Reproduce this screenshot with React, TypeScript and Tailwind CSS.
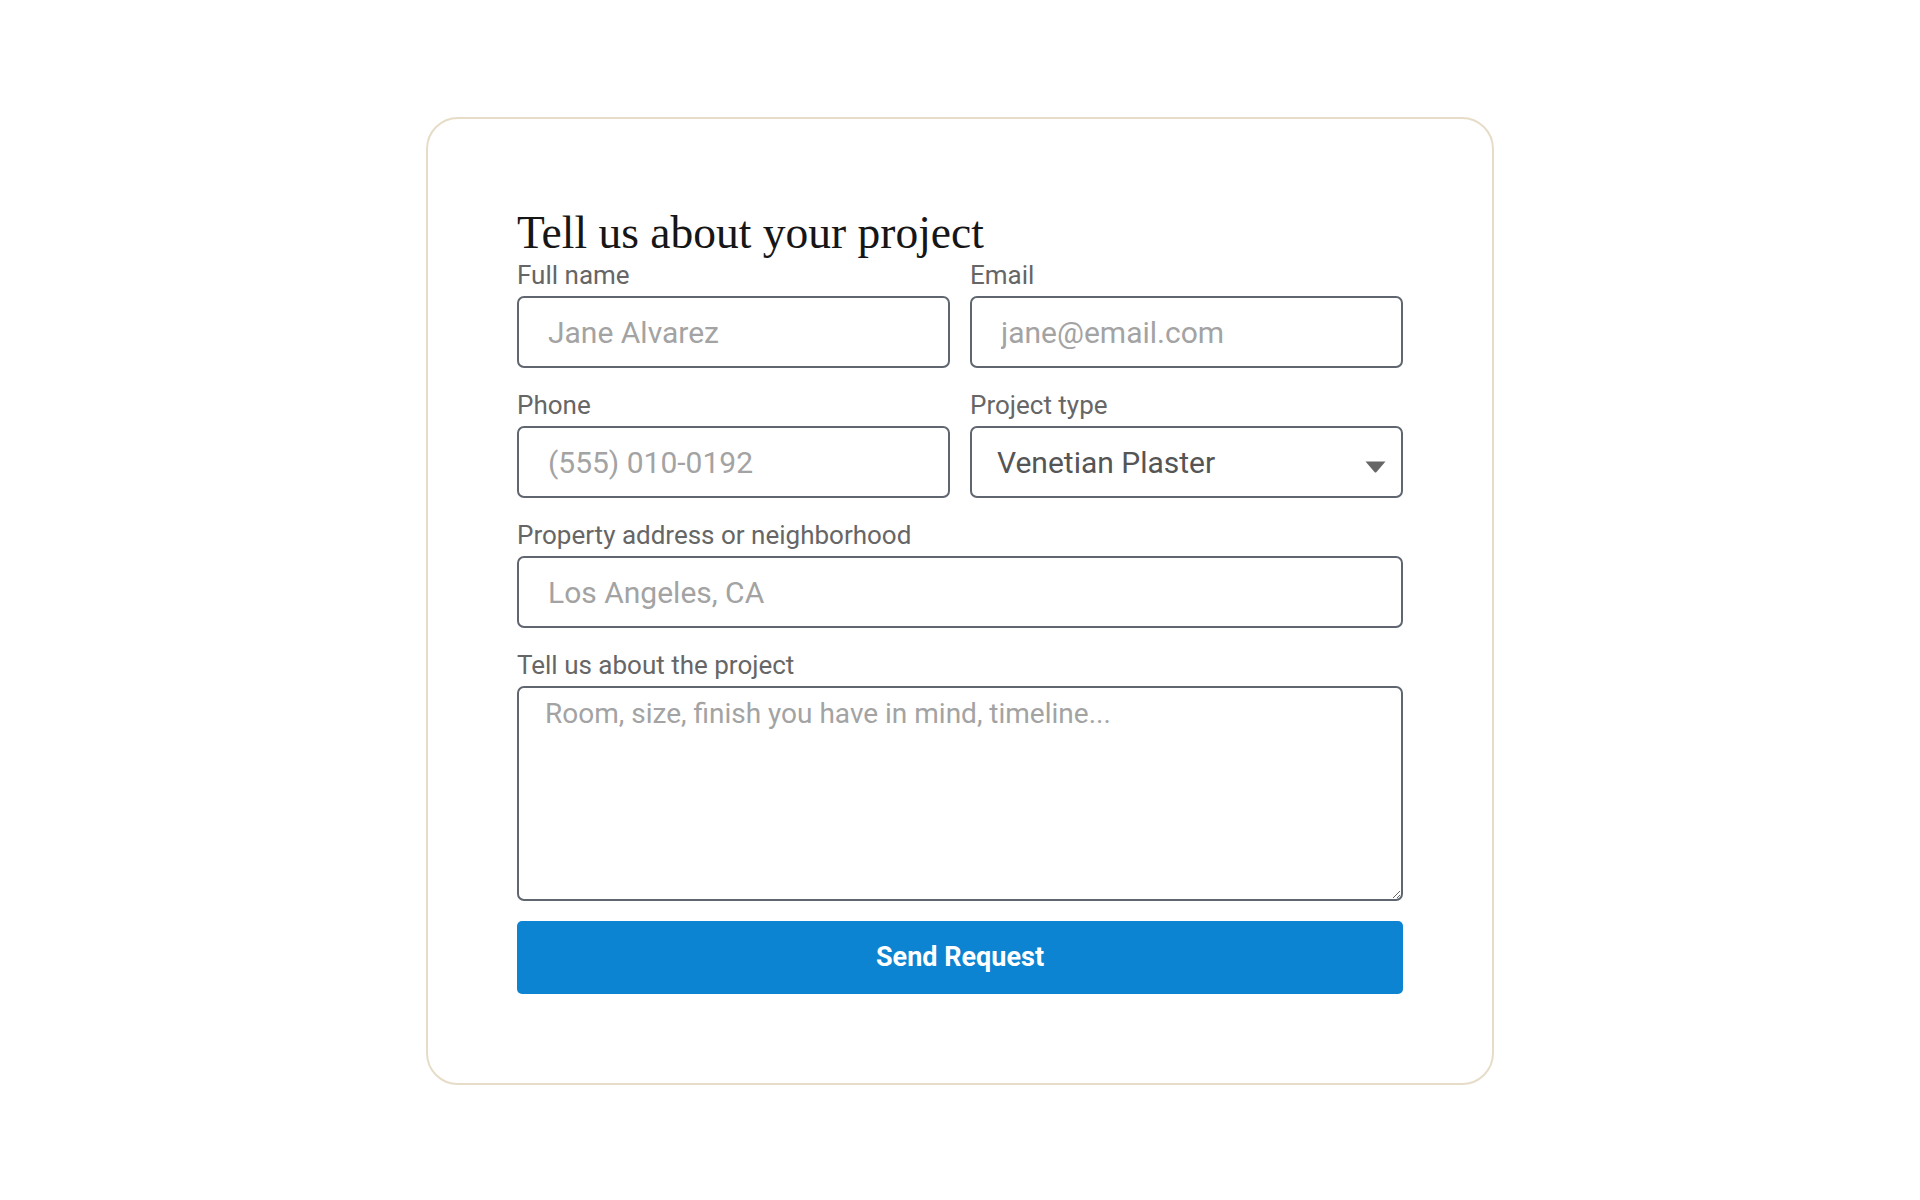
import { useState } from "react";

const labelCls = "block text-[26px] leading-[31px] text-[#666666] mb-[5px]";
const inputCls =
  "w-full h-[72px] rounded-[7px] border-2 border-[#5f6670] bg-white px-[29px] text-[30px] text-[#333] placeholder:text-[#a3a3a3] outline-none";

function Field({ label, children }: { label: string; children: React.ReactNode }) {
  return (
    <div className="flex flex-col">
      <label className={labelCls}>{label}</label>
      {children}
    </div>
  );
}

export default function App() {
  const [projectType, setProjectType] = useState("Venetian Plaster");

  return (
    <div
      className="min-h-screen flex items-center justify-center bg-white pt-[2px]"
      style={{ fontFamily: "Roboto, 'Liberation Sans', sans-serif" }}
    >
      <div className="w-[1068px] rounded-[32px] border-2 border-[#e6dcc7] bg-white px-[89px] pt-[89px] pb-[89px]">
        <h2 className="font-['Liberation_Serif',serif] text-[45.5px] leading-[1.1] text-[#161616] mb-[2px]">
          Tell us about your project
        </h2>

        <form className="flex flex-col gap-[22px]" onSubmit={(e) => e.preventDefault()}>
          <div className="grid grid-cols-2 gap-x-[20px] gap-y-[22px]">
            <Field label="Full name">
              <input className={inputCls} placeholder="Jane Alvarez" />
            </Field>
            <Field label="Email">
              <input className={inputCls} placeholder="jane@email.com" />
            </Field>
            <Field label="Phone">
              <input className={inputCls} placeholder="(555) 010-0192" />
            </Field>
            <Field label="Project type">
              <div className="relative">
                <select
                  value={projectType}
                  onChange={(e) => setProjectType(e.target.value)}
                  className="w-full h-[72px] appearance-none rounded-[7px] border-2 border-[#5f6670] bg-white pl-[25px] pr-[50px] text-[30px] text-[#555555] outline-none"
                >
                  <option>Venetian Plaster</option>
                  <option>Tadelakt</option>
                  <option>Limewash</option>
                  <option>Microcement</option>
                </select>
                <svg
                  className="pointer-events-none absolute right-[17px] top-[35px]"
                  width="21"
                  height="12"
                  viewBox="0 0 21 12"
                >
                  <path d="M0.5 0.5 H20.5 L11.3 11.2 Q10.5 12 9.7 11.2 Z" fill="#666666" />
                </svg>
              </div>
            </Field>
          </div>

          <Field label="Property address or neighborhood">
            <input className={inputCls} placeholder="Los Angeles, CA" />
          </Field>

          <Field label="Tell us about the project">
            <textarea
              className="w-full h-[215px] rounded-[7px] border-2 border-[#5f6670] bg-white px-[26px] py-[9px] text-[28px] leading-[1.2] text-[#333] placeholder:text-[#a3a3a3] outline-none"
              placeholder="Room, size, finish you have in mind, timeline..."
            />
          </Field>

          <button
            type="submit"
            className="mt-[-2px] h-[73px] w-full rounded-[5px] bg-[#0c84d1] text-[27px] font-bold text-white"
          >
            Send Request
          </button>
        </form>
      </div>
    </div>
  );
}
